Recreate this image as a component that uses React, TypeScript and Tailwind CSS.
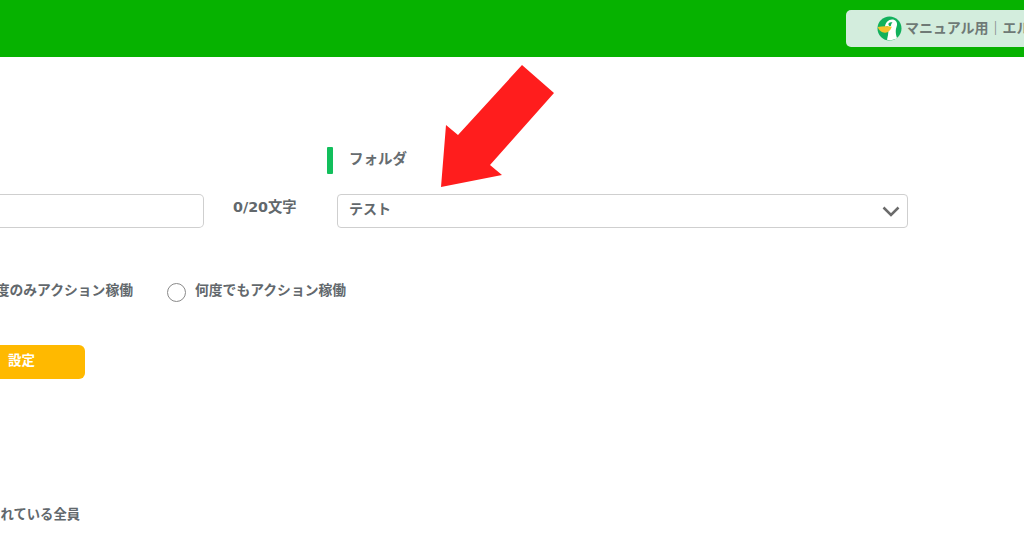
const font = "font-['DejaVu_Sans','Noto_Sans_CJK_JP',sans-serif]";

function Logo() {
  return (
    <svg width="25" height="25" viewBox="0 0 25 25" className="shrink-0">
      <circle cx="12.5" cy="12.5" r="12" fill="#12b15c" />
      <path d="M8 10.500C8.500 6.500 11.500 3.500 15 3.500c3.500 0 5.500 2.500 5 5.500-.3 2-1 3-1.200 5-.2 2.500.2 5.500 1.200 8-2.500 2-7 2.700-10 1.700.8-3 1.500-6.500 1.300-9.700l-.3-3.500c-.8-.3-1.800-.3-3 .5z" fill="#fff" />
      <path d="M11.500 7.500c1-1.200 3-1.500 4-.7-1 .3-1.500 1.500-1.500 3l-1.500.5c-.8-1-1.300-1.800-1-2.800z" fill="#12b15c" />
      <path d="M.8 11c4-.8 9-.8 14-.3-1 3-3.500 5.800-6.500 6-3.500.2-6.500-2.200-7.500-5.700z" fill="#f5c32c" />
    </svg>
  );
}

function Radio() {
  return <span className="w-[19px] h-[19px] rounded-full border border-[#8a8a8a] bg-white shrink-0 mt-[3px]" />;
}

export default function App() {
  return (
    <div className={`relative w-[1024px] h-[538px] overflow-hidden bg-white text-[#62686c] ${font}`}>
      <header className="h-[57px] bg-[#06b200] flex items-center pl-[846px]">
        <div className="w-[220px] h-[37px] shrink-0 rounded-[5px] bg-[#d3eddd] flex items-center pl-[31px] gap-[3px] text-[#6f7a76] font-bold text-[14px] leading-[24px] whitespace-nowrap">
          <Logo />
          <span className="pb-[2px]">マニュアル用｜エルメ</span>
        </div>
      </header>

      <main className="flex flex-col">
        <div className="h-[27px] mt-[90px] ml-[327px] flex items-center gap-[16px]">
          <span className="w-[6px] h-[27px] bg-[#12bf5c] rounded-[1px]" />
          <span className="text-[14.500px] font-bold text-[#666c70] pb-[1px]">フォルダ</span>
        </div>

        <div className="flex items-start mt-[20px] h-[34px]">
          <div className="w-[204px] h-[34px] bg-white border border-[#cfcfcf] rounded-r-[5px] border-l-0" />
          <span className="ml-[29px] w-[104px] text-[14.300px] font-bold h-[28px] flex items-center whitespace-nowrap">0/20文字</span>
          <div className="w-[571px] h-[34px] border border-[#cfcfcf] rounded-[4px] flex items-center justify-between pl-[11px] pr-[7px]">
            <span className="text-[14px] font-bold pb-[3px]">テスト</span>
            <svg width="18" height="11" viewBox="0 0 18 11" fill="none" stroke="#6b6b6b" strokeWidth="2.500">
              <path d="M1.500 1.500 9 9l7.500-7.500" />
            </svg>
          </div>
        </div>

        <div className="flex items-start mt-[52px] h-[22px] text-[13.800px] font-bold whitespace-nowrap leading-[20px]">
          <div className="w-[133px] overflow-hidden flex justify-end shrink-0">
            <span className="shrink-0">一度のみアクション稼働</span>
          </div>
          <div className="ml-[34px] flex items-start gap-[9px]">
            <Radio />
            <span>何度でもアクション稼働</span>
          </div>
        </div>

        <div className="mt-[43px] w-[85px] h-[34px] bg-[#ffb900] rounded-r-[6px] flex items-center pl-[8px] text-white text-[13.500px] font-bold">
          <span className="pb-[3px]">設定</span>
        </div>

        <div className="mt-[126px] w-[80px] overflow-hidden flex justify-end whitespace-nowrap text-[13.300px] font-bold">
          <span className="shrink-0">登録されている全員</span>
        </div>
      </main>

      <svg className="absolute left-[430px] top-[55px]" width="135" height="142" viewBox="430 55 135 142">
        <polygon points="441,187 446,125 458,135 522,65 554,93 490,165 502,175" fill="#ff1d1d" />
      </svg>
    </div>
  );
}
